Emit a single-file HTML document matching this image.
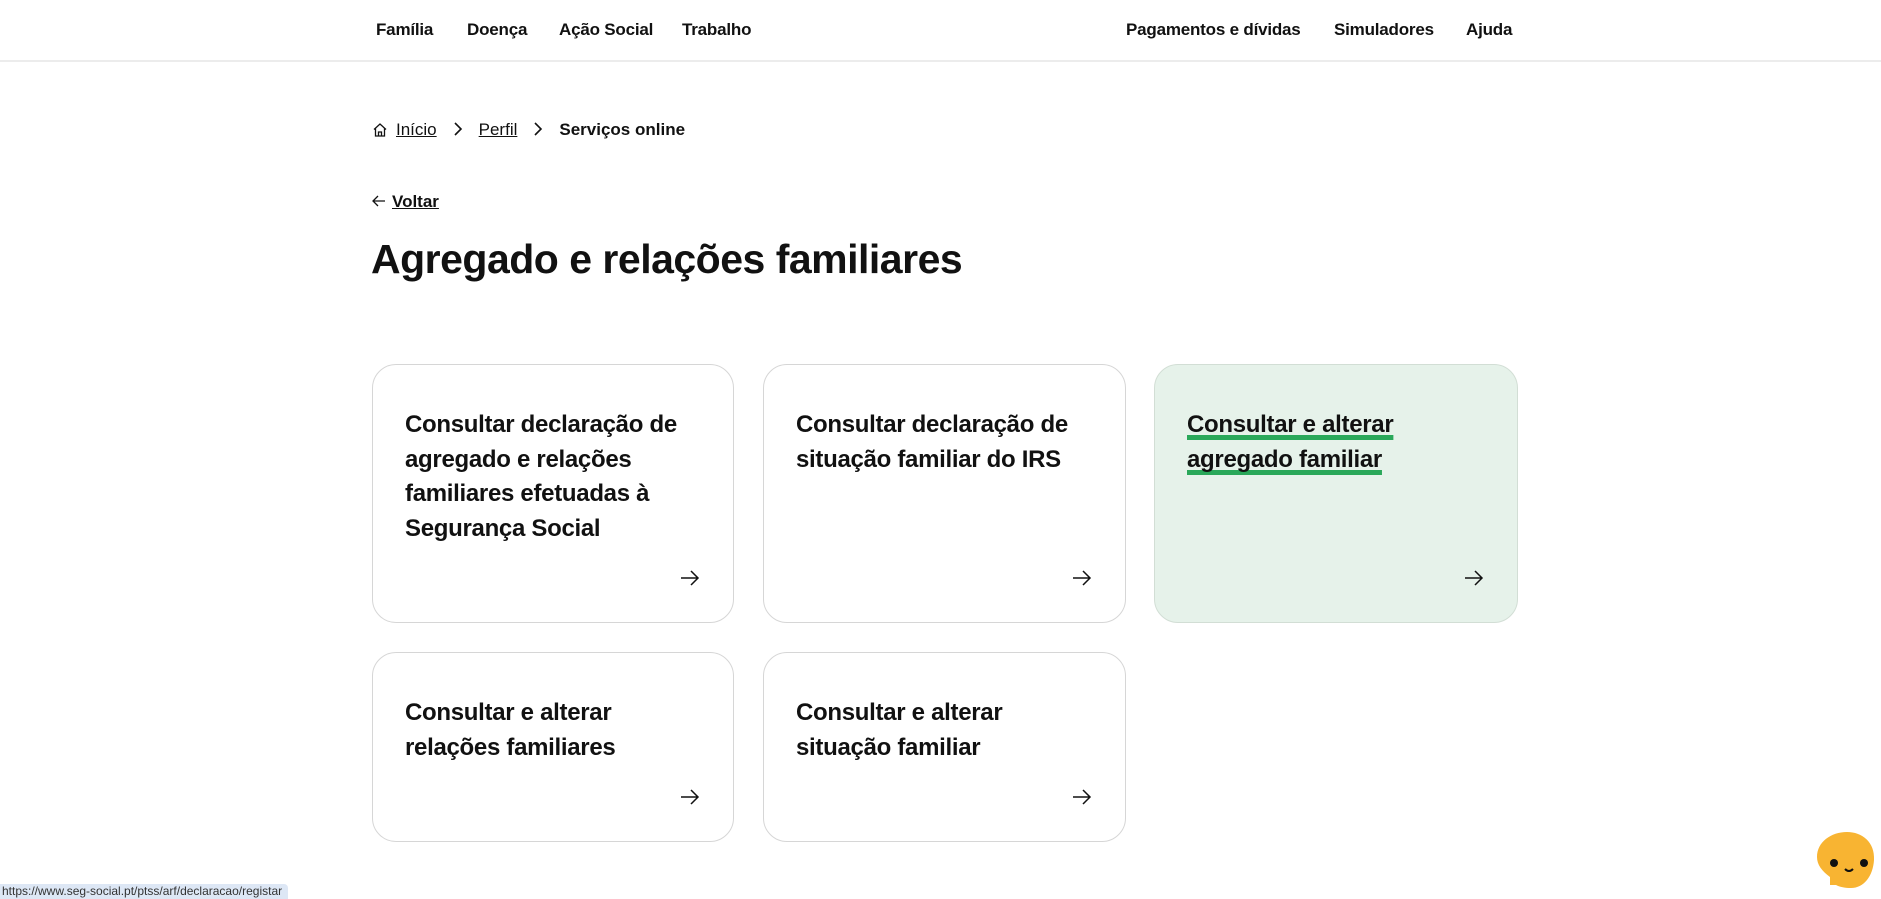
<!DOCTYPE html>
<html><head><meta charset="utf-8"><style>
*{box-sizing:border-box;margin:0;padding:0}
body{width:1881px;height:899px;overflow:hidden;background:#fff;font-family:"Liberation Sans",sans-serif;color:#111;position:relative}
header{height:62px;border-bottom:2px solid #ececec;position:relative}
.nav a{position:absolute;top:20px;font-weight:bold;font-size:17px;color:#111;text-decoration:none;letter-spacing:-0.2px}
.bc{position:absolute;top:120px;left:372px;font-size:17px;display:flex;align-items:center}
.bc a{color:#111;text-decoration:underline}
.bc .sep{margin:0 16px;font-size:16px;position:relative;top:1px}
.back{position:absolute;top:192px;left:372px;font-size:17px}
.back a{color:#111;text-decoration:underline;font-weight:bold;margin-left:6px}
h1{position:absolute;top:236px;left:371px;font-size:41px;font-weight:bold;letter-spacing:-0.5px}
.card{position:absolute;border:1px solid #d6d6d6;border-radius:24px;background:#fff;padding:43px 32px 0 32px}
.card h2{font-size:24px;line-height:34.5px;font-weight:bold;letter-spacing:-0.3px}
.card svg{position:absolute;right:33px}
.hl{background:#e6f2ea;border-color:#d2ded5}
.hl h2 span{text-decoration:underline;text-decoration-color:#2aa85a;text-decoration-thickness:5px;text-underline-offset:3px;text-decoration-skip-ink:none}
.status{position:absolute;left:0;top:884px;height:15px;width:288px;background:#dde7f5;font-size:12px;color:#333;padding-left:2px;border-top-right-radius:4px;line-height:15px}
</style></head><body>
<header class="nav">
<a style="left:376px">Família</a>
<a style="left:467px">Doença</a>
<a style="left:559px">Ação Social</a>
<a style="left:682px">Trabalho</a>
<a style="left:1126px">Pagamentos e dívidas</a>
<a style="left:1334px">Simuladores</a>
<a style="left:1466px">Ajuda</a>
</header>
<div class="bc">
<svg width="16" height="16" viewBox="0 0 16 16" style="margin-right:8px"><path d="M2 7.5L8 2l6 5.5M3.5 6.5V14h9V6.5M6.5 14v-4h3v4" fill="none" stroke="#111" stroke-width="1.3"/></svg>
<a>Início</a><span class="sep">
<svg width="10" height="14" viewBox="0 0 10 14"><path d="M2 1l6 6-6 6" fill="none" stroke="#111" stroke-width="1.6"/></svg></span>
<a>Perfil</a><span class="sep"><svg width="10" height="14" viewBox="0 0 10 14"><path d="M2 1l6 6-6 6" fill="none" stroke="#111" stroke-width="1.6"/></svg></span>
<b>Serviços online</b>
</div>
<div class="back"><svg width="14" height="12" viewBox="0 0 14 12"><path d="M13 6H2M6 1L1 6l5 5" fill="none" stroke="#111" stroke-width="1.3"/></svg><a>Voltar</a></div>
<h1>Agregado e relações familiares</h1>

<div class="card" style="left:372px;top:364px;width:362px;height:259px"><h2>Consultar declaração de agregado e relações familiares efetuadas à Segurança Social</h2>
<svg style="top:204px" width="20" height="18" viewBox="0 0 20 18"><path d="M1 9h17M11 2l7 7-7 7" fill="none" stroke="#111" stroke-width="1.5"/></svg></div>
<div class="card" style="left:763px;top:364px;width:363px;height:259px"><h2>Consultar declaração de situação familiar do IRS</h2>
<svg style="top:204px" width="20" height="18" viewBox="0 0 20 18"><path d="M1 9h17M11 2l7 7-7 7" fill="none" stroke="#111" stroke-width="1.5"/></svg></div>
<div class="card hl" style="left:1154px;top:364px;width:364px;height:259px"><h2><span>Consultar e alterar</span><br><span>agregado familiar</span></h2>
<svg style="top:204px" width="20" height="18" viewBox="0 0 20 18"><path d="M1 9h17M11 2l7 7-7 7" fill="none" stroke="#111" stroke-width="1.5"/></svg></div>
<div class="card" style="left:372px;top:652px;width:362px;height:190px"><h2>Consultar e alterar relações familiares</h2>
<svg style="top:135px" width="20" height="18" viewBox="0 0 20 18"><path d="M1 9h17M11 2l7 7-7 7" fill="none" stroke="#111" stroke-width="1.5"/></svg></div>
<div class="card" style="left:763px;top:652px;width:363px;height:190px"><h2>Consultar e alterar situação familiar</h2>
<svg style="top:135px" width="20" height="18" viewBox="0 0 20 18"><path d="M1 9h17M11 2l7 7-7 7" fill="none" stroke="#111" stroke-width="1.5"/></svg></div>

<svg style="position:absolute;left:1814px;top:830px" width="62" height="62" viewBox="0 0 62 62"><path d="M33 2C48 2 61 12 60 30C59 46 50 58 37 58C31 58 26 57 22 55H16V47C8 41 3 35 3 27C3 12 17 2 33 2Z" fill="#f8b432"/><circle cx="20" cy="33" r="4" fill="#111"/><circle cx="50" cy="33" r="4" fill="#111"/><path d="M31 39q4 4 8 0" fill="none" stroke="#111" stroke-width="2"/></svg>
<div class="status">https://www.seg-social.pt/ptss/arf/declaracao/registar</div>
</body></html>
